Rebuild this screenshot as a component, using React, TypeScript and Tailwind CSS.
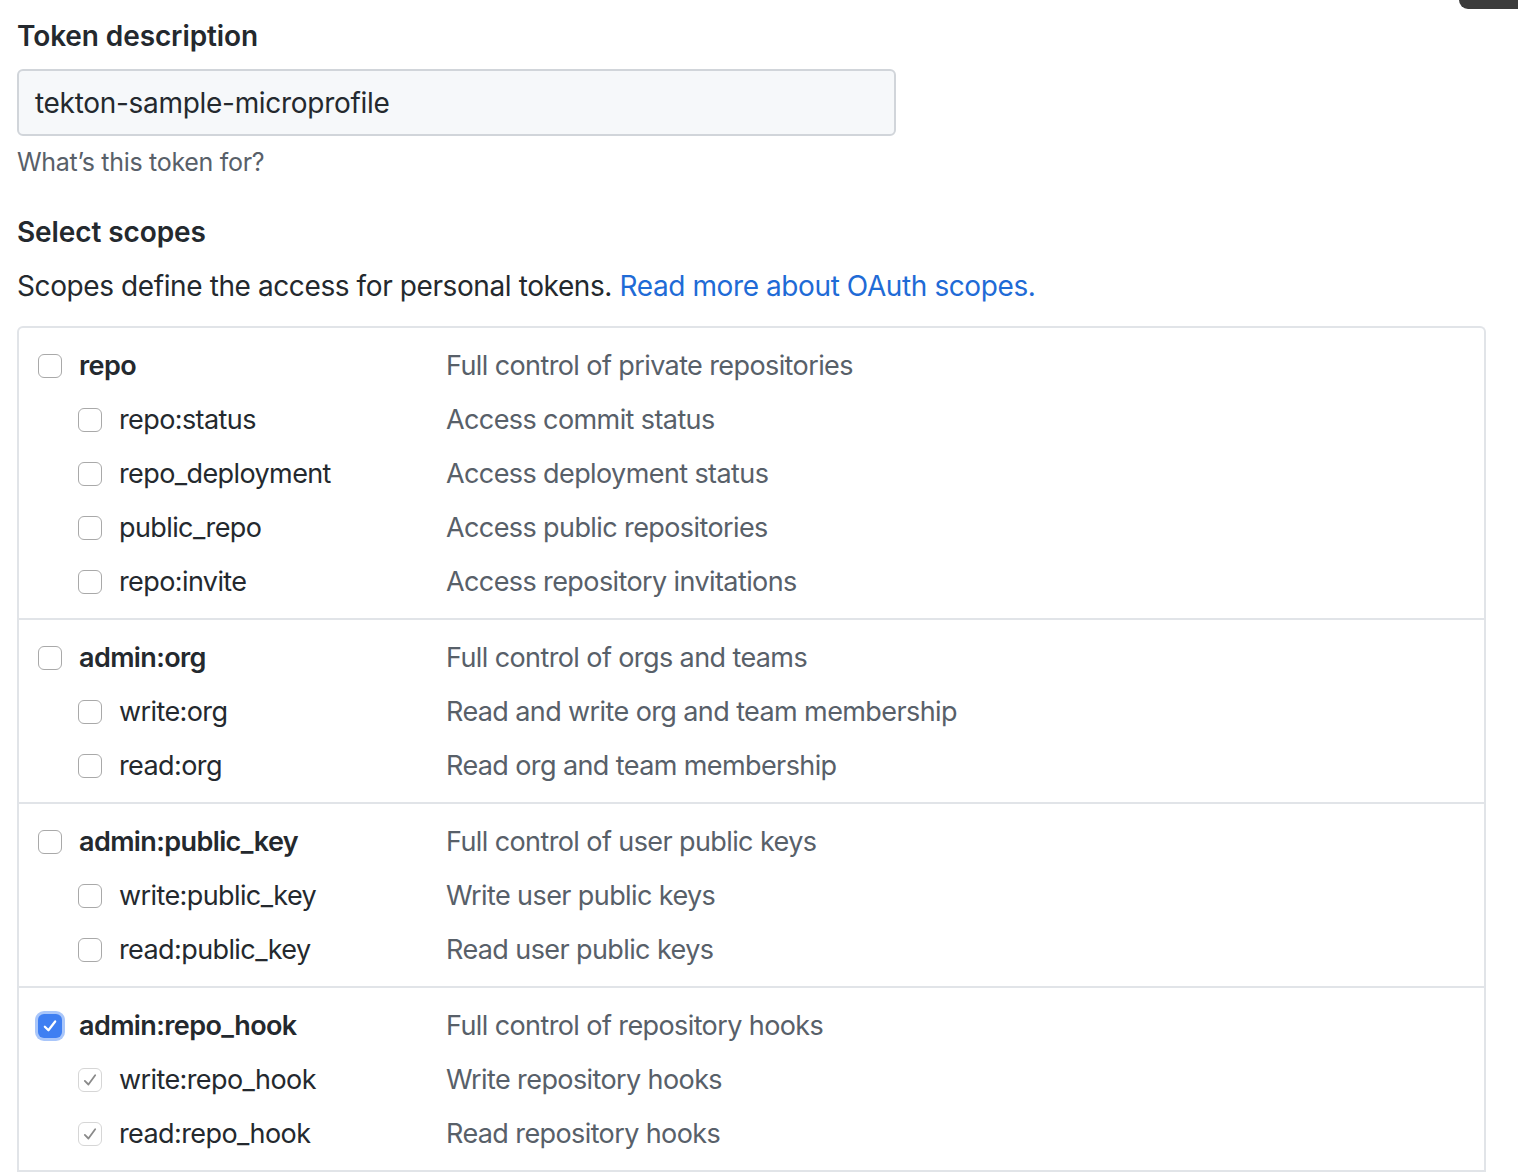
const groups = [
  {
    name: "repo",
    desc: "Full control of private repositories",
    checked: false,
    children: [
      ["repo:status", "Access commit status"],
      ["repo_deployment", "Access deployment status"],
      ["public_repo", "Access public repositories"],
      ["repo:invite", "Access repository invitations"],
    ],
  },
  {
    name: "admin:org",
    desc: "Full control of orgs and teams",
    checked: false,
    children: [
      ["write:org", "Read and write org and team membership"],
      ["read:org", "Read org and team membership"],
    ],
  },
  {
    name: "admin:public_key",
    desc: "Full control of user public keys",
    checked: false,
    children: [
      ["write:public_key", "Write user public keys"],
      ["read:public_key", "Read user public keys"],
    ],
  },
  {
    name: "admin:repo_hook",
    desc: "Full control of repository hooks",
    checked: true,
    children: [
      ["write:repo_hook", "Write repository hooks"],
      ["read:repo_hook", "Read repository hooks"],
    ],
  },
];

const Box = ({ state }: { state: "off" | "on" | "implied" }) => {
  if (state === "on") {
    return (
      <span className="w-[24px] h-[24px] rounded-[6px] bg-[#3f7ff2] ring-[3px] ring-[#a9c6fa] flex items-center justify-center shrink-0">
        <svg width="18" height="18" viewBox="0 0 16 16" fill="none">
          <path d="M3.4 8.6 L6.6 11.8 L12.6 4" stroke="white" strokeWidth="2" strokeLinecap="round" strokeLinejoin="round" />
        </svg>
      </span>
    );
  }
  return (
    <span className={`w-[24px] h-[24px] rounded-[6px] border bg-white flex items-center justify-center shrink-0 ${state === "implied" ? "border-[#d6d6d6]" : "border-[#a9a9a9]"}`}>
      {state === "implied" && (
        <svg width="18" height="18" viewBox="0 0 16 16" fill="none">
          <path d="M3.4 8.8 L6.6 12 L12.6 3.8" stroke="#8a8a8a" strokeWidth="1.6" strokeLinecap="round" strokeLinejoin="round" />
        </svg>
      )}
    </span>
  );
};

const App = () => {
  return (
    <div className="relative min-h-screen bg-white text-[#24292e] font-['Inter','Noto_Sans',sans-serif] overflow-hidden">

      <div className="absolute top-0 right-0 w-[59px] h-[9px] bg-[#3b3b3b] rounded-bl-[10px]" />

      <div className="pl-[17px] pt-[18px] pr-[33px]">

        <h2 className="text-[28px] leading-[36px] font-semibold tracking-[-0.1px]">
          Token description
        </h2>

        <div className="mt-[15px] w-[879px] h-[67px] rounded-[6px] border-2 border-[#d1d5da] bg-[#f6f8fa] flex items-center px-[16px]">
          <span className="text-[28px] tracking-[-0.3px]">tekton-sample-microprofile</span>
        </div>

        <p className="mt-[10px] text-[25px] leading-[32px] tracking-[-0.3px] text-[#586069]">
          What’s this token for?
        </p>

        <h2 className="mt-[36px] text-[28px] leading-[36px] font-semibold tracking-[-0.1px]">
          Select scopes
        </h2>

        <p className="mt-[18px] text-[28px] leading-[36px] tracking-[-0.4px]">
          Scopes define the access for personal tokens.{" "}
          <a className="text-[#1f6bd6]">Read more about OAuth scopes.</a>
        </p>

        <div className="mt-[22px] w-[1469px] border-2 border-[#e1e4e8] rounded-[6px] border-b-0 rounded-b-none">

          {groups.map((g) => (
            <div key={g.name} className="pt-[11px] pb-[9px] border-b-2 border-[#e1e4e8]">

              <div className="h-[54px] flex items-center">
                <div className="w-[427px] flex items-center gap-[17px] pl-[19px]">
                  <Box state={g.checked ? "on" : "off"} />
                  <span className="text-[27px] font-semibold tracking-[-0.6px]">{g.name}</span>
                </div>
                <span className="text-[27px] tracking-[-0.6px] text-[#586069]">{g.desc}</span>
              </div>

              {g.children.map(([name, desc]) => (
                <div key={name} className="h-[54px] flex items-center">
                  <div className="w-[427px] flex items-center gap-[17px] pl-[59px]">
                    <Box state={g.checked ? "implied" : "off"} />
                    <span className="text-[27px] tracking-[-0.6px]">{name}</span>
                  </div>
                  <span className="text-[27px] tracking-[-0.6px] text-[#586069]">{desc}</span>
                </div>
              ))}

            </div>
          ))}

        </div>

      </div>

    </div>
  );
};

export default App;
